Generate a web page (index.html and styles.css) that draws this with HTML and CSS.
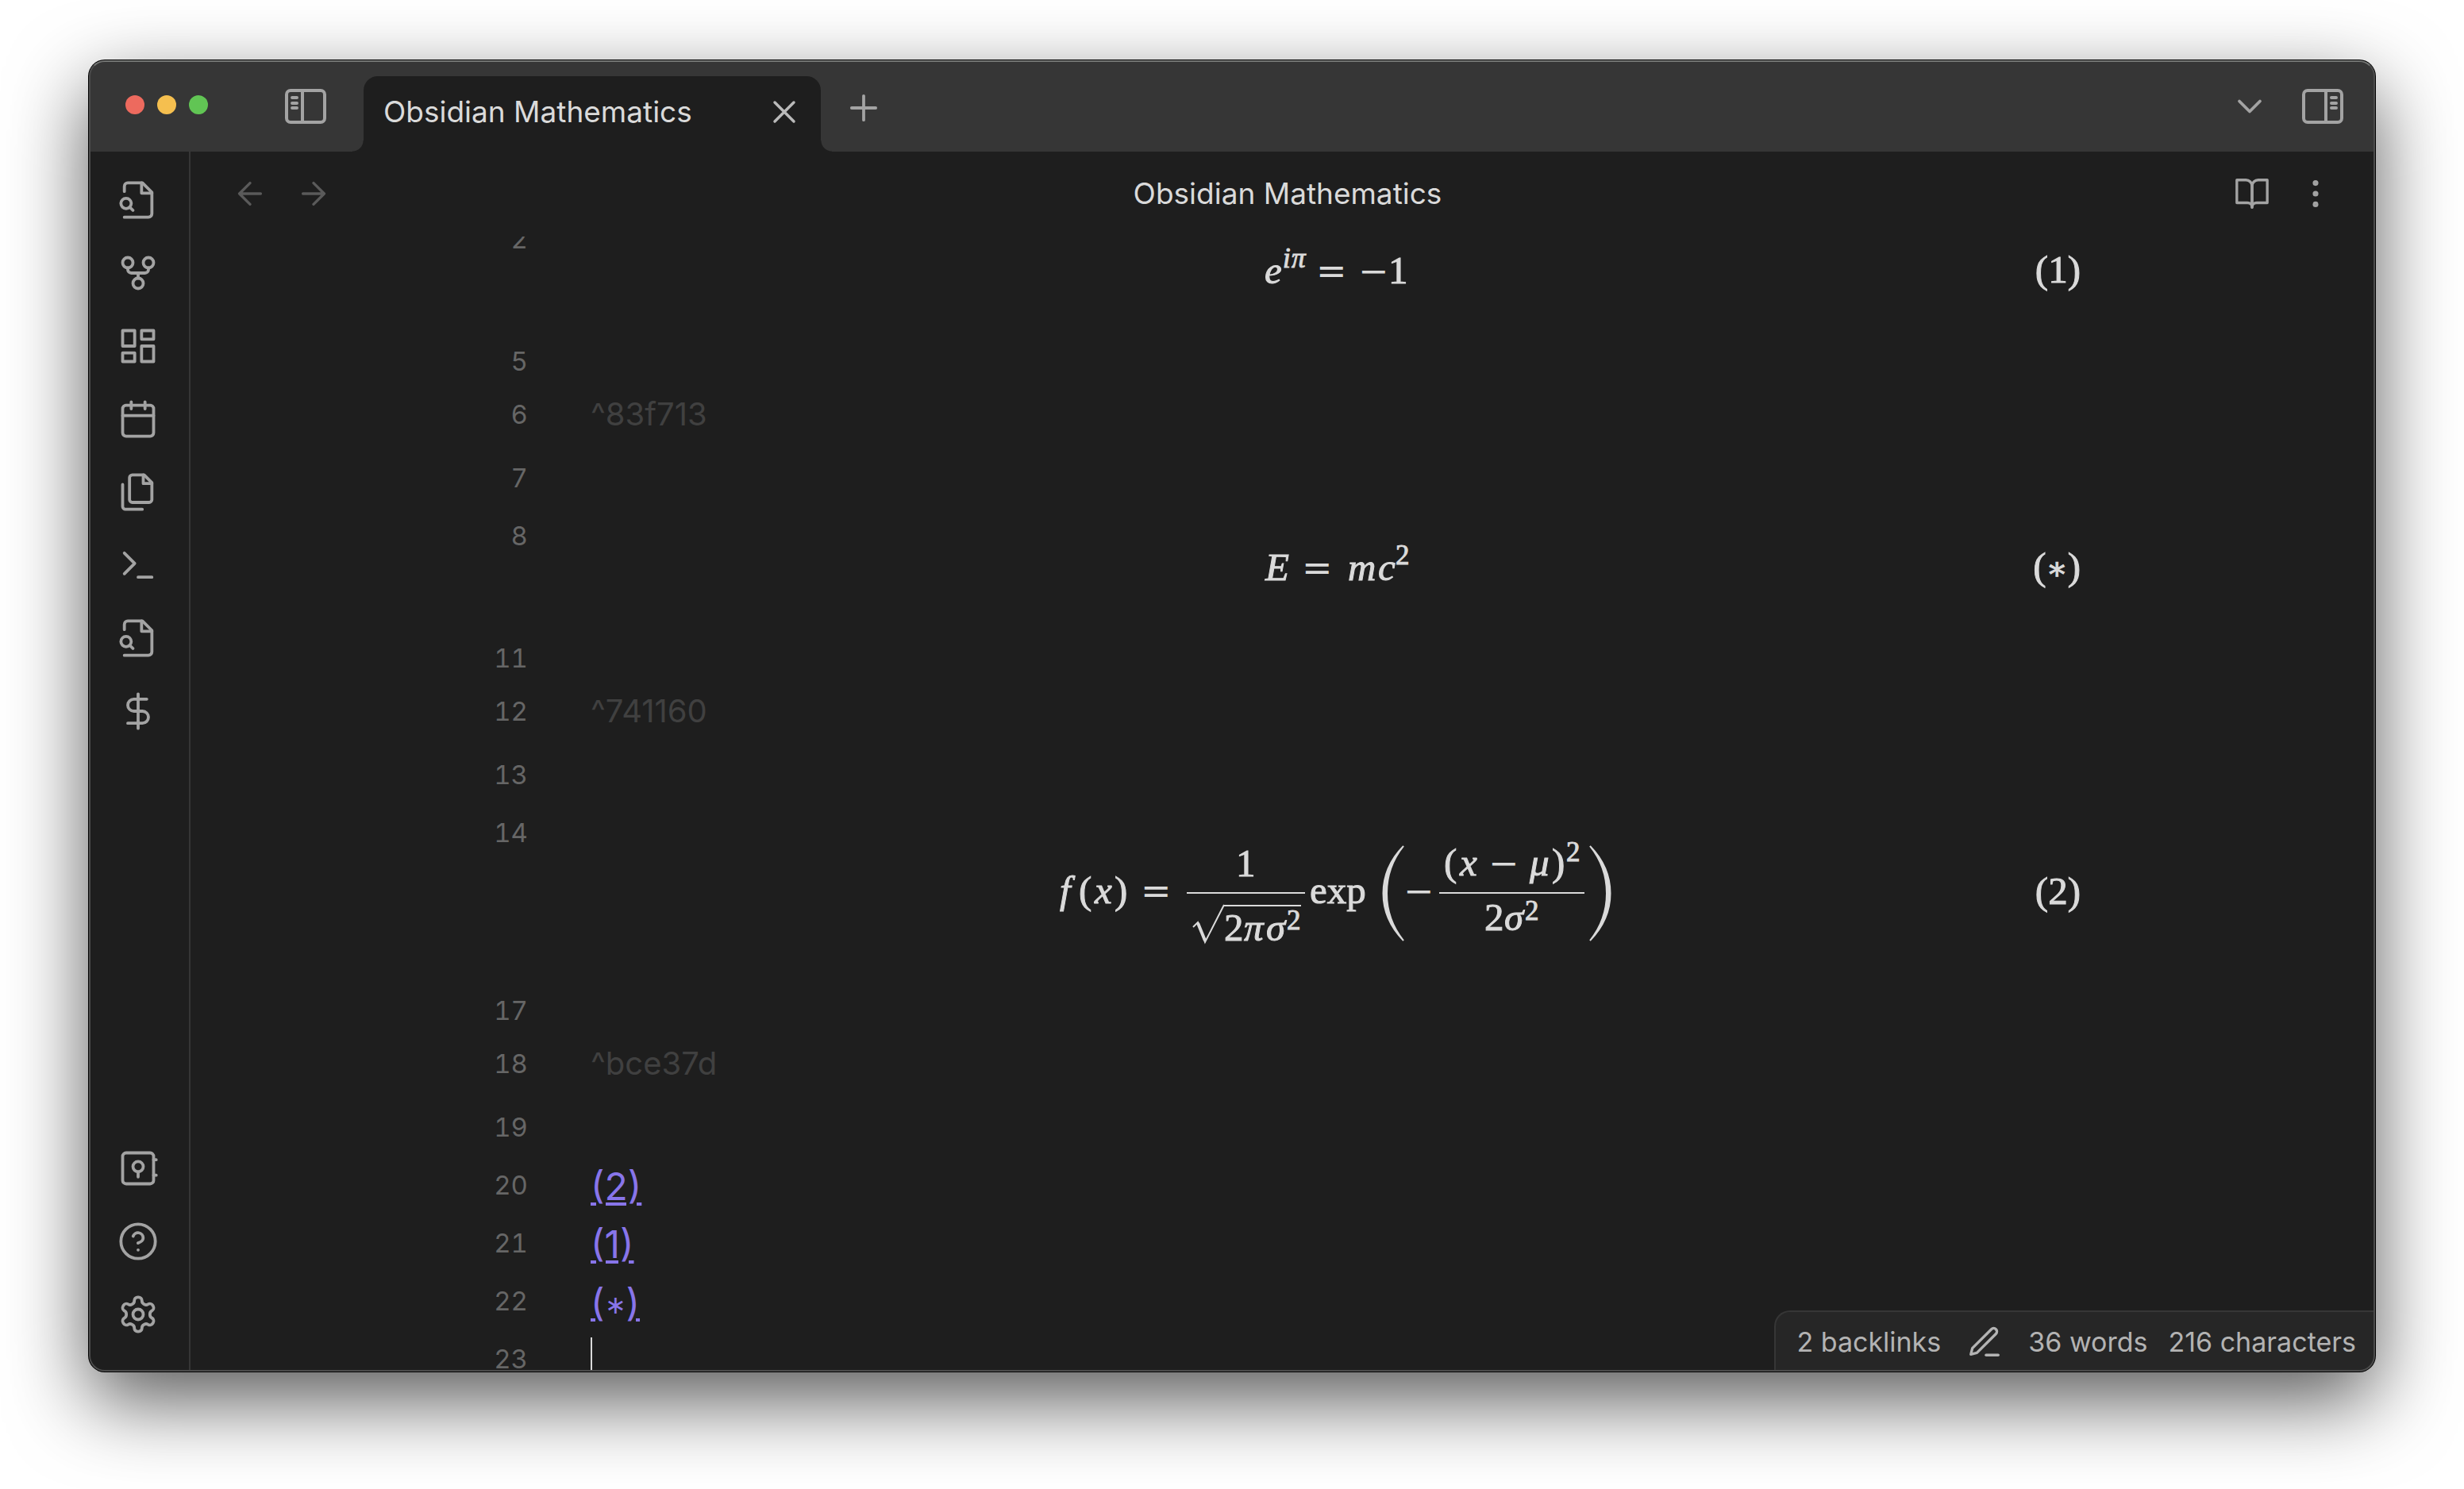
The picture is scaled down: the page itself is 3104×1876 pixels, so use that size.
FILE: index.html
```html
<!DOCTYPE html>
<html lang="en">
<head>
<meta charset="utf-8">
<title>Obsidian Mathematics</title>
<link rel="stylesheet" href="styles.css">
</head>
<body>
<svg class="sprite" aria-hidden="true">
  <symbol id="i-file-search" viewBox="0 0 24 24"><path d="M4 22h14a2 2 0 0 0 2-2V7.5L14.5 2H6a2 2 0 0 0-2 2v3"/><path d="M14 2v6h6"/><path d="M5 17a3 3 0 1 0 0-6 3 3 0 0 0 0 6z"/><path d="m9 18-1.5-1.5"/></symbol>
</svg>
<div class="window">
  <header class="titlebar">
    <div class="titlebar-left">
      <div class="lights">
        <button class="light red" aria-label="Close window"></button>
        <button class="light yellow" aria-label="Minimize window"></button>
        <button class="light green" aria-label="Zoom window"></button>
      </div>
      <button class="btn" aria-label="Toggle left sidebar">
        <svg class="panel" viewBox="0 0 52 44"><rect x="2" y="2" width="48" height="40" rx="5"/><path d="M22 2v40M9 11h6M9 18h6M9 24h6"/></svg>
      </button>
    </div>
    <div class="tab">
      <span class="tab-title">Obsidian Mathematics</span>
      <button class="btn bright" aria-label="Close tab"><svg class="icon s48" viewBox="0 0 24 24"><path d="M18 6 6 18M6 6l12 12"/></svg></button>
    </div>
    <button class="btn new-tab" aria-label="New tab"><svg class="icon s52" viewBox="0 0 24 24"><path d="M12 5v14M5 12h14"/></svg></button>
    <div class="titlebar-right">
      <button class="btn" aria-label="Tab list"><svg class="icon s52" viewBox="0 0 24 24"><path d="m6 9 6 6 6-6"/></svg></button>
      <button class="btn" aria-label="Toggle right sidebar">
        <svg class="panel" viewBox="0 0 52 44"><rect x="2" y="2" width="48" height="40" rx="5"/><path d="M30 2v40M37 11h6M37 18h6M37 24h6"/></svg>
      </button>
    </div>
  </header>

  <div class="body">
    <nav class="ribbon" aria-label="Ribbon">
      <div class="ribbon-group">
        <button class="btn" aria-label="Open quick switcher"><svg class="icon s52"><use href="#i-file-search"/></svg></button>
        <button class="btn" aria-label="Open graph view"><svg class="icon s52" viewBox="0 0 24 24"><circle cx="12" cy="18" r="3"/><circle cx="6" cy="6" r="3"/><circle cx="18" cy="6" r="3"/><path d="M18 9v1a2 2 0 0 1-2 2H8a2 2 0 0 1-2-2V9M12 12v3"/></svg></button>
        <button class="btn" aria-label="Create new canvas"><svg class="icon s52" viewBox="0 0 24 24"><rect x="3" y="3" width="7" height="9"/><rect x="14" y="3" width="7" height="5"/><rect x="14" y="12" width="7" height="9"/><rect x="3" y="16" width="7" height="5"/></svg></button>
        <button class="btn" aria-label="Open daily note"><svg class="icon s52" viewBox="0 0 24 24"><rect x="3" y="4" width="18" height="18" rx="2"/><path d="M16 2v4M8 2v4M3 10h18"/></svg></button>
        <button class="btn" aria-label="Insert template"><svg class="icon s52" viewBox="0 0 24 24"><path d="M15.5 2H8.6c-.4 0-.8.2-1.1.5-.3.3-.5.7-.5 1.1v12.8c0 .4.2.8.5 1.1.3.3.7.5 1.1.5h9.8c.4 0 .8-.2 1.1-.5.3-.3.5-.7.5-1.1V6.5L15.5 2z"/><path d="M3 7.6v12.8c0 .4.2.8.5 1.1.3.3.7.5 1.1.5h9.8"/><path d="M15 2v5h5"/></svg></button>
        <button class="btn" aria-label="Open command palette"><svg class="icon s52" viewBox="0 0 24 24"><path d="m4 17 6-6-6-6M12 19h8"/></svg></button>
        <button class="btn" aria-label="Search files"><svg class="icon s52"><use href="#i-file-search"/></svg></button>
        <button class="btn" aria-label="Math settings"><svg class="icon s52" viewBox="0 0 24 24"><path d="M12 2v20"/><path d="M17 5H9.500a3.500 3.500 0 0 0 0 7h5a3.500 3.500 0 0 1 0 7H6"/></svg></button>
      </div>
      <div class="ribbon-group">
        <button class="btn" aria-label="Open another vault"><svg class="icon s52" viewBox="0 0 24 24"><rect x="3" y="3" width="18" height="18" rx="2"/><circle cx="12" cy="11" r="3"/><path d="M12 14v3M21 7h1.500M21 16h1.500"/></svg></button>
        <button class="btn" aria-label="Help"><svg class="icon s52" viewBox="0 0 24 24"><circle cx="12" cy="12" r="10"/><path d="M9.090 9a3 3 0 0 1 5.830 1c0 2-3 3-3 3M12 17h.01"/></svg></button>
        <button class="btn" aria-label="Settings"><svg class="icon s52" viewBox="0 0 24 24"><path d="M12.220 2h-.44a2 2 0 0 0-2 2v.18a2 2 0 0 1-1 1.730l-.43.25a2 2 0 0 1-2 0l-.15-.08a2 2 0 0 0-2.730.73l-.22.38a2 2 0 0 0 .73 2.730l.15.1a2 2 0 0 1 1 1.720v.51a2 2 0 0 1-1 1.740l-.15.09a2 2 0 0 0-.73 2.730l.22.38a2 2 0 0 0 2.730.73l.15-.08a2 2 0 0 1 2 0l.43.25a2 2 0 0 1 1 1.730V20a2 2 0 0 0 2 2h.44a2 2 0 0 0 2-2v-.18a2 2 0 0 1 1-1.730l.43-.25a2 2 0 0 1 2 0l.15.08a2 2 0 0 0 2.730-.73l.22-.39a2 2 0 0 0-.73-2.730l-.15-.08a2 2 0 0 1-1-1.740v-.5a2 2 0 0 1 1-1.740l.15-.09a2 2 0 0 0 .73-2.730l-.22-.38a2 2 0 0 0-2.730-.73l-.15.08a2 2 0 0 1-2 0l-.43-.25a2 2 0 0 1-1-1.730V4a2 2 0 0 0-2-2z"/><circle cx="12" cy="12" r="3"/></svg></button>
      </div>
    </nav>

    <main class="view">
      <div class="view-header">
        <div class="view-nav">
          <button class="btn dim" aria-label="Back"><svg class="icon s46" viewBox="0 0 24 24"><path d="M19 12H5M12 19l-7-7 7-7"/></svg></button>
          <button class="btn dim" aria-label="Forward"><svg class="icon s46" viewBox="0 0 24 24"><path d="M5 12h14M12 5l7 7-7 7"/></svg></button>
        </div>
        <h1 class="view-title">Obsidian Mathematics</h1>
        <div class="view-actions">
          <button class="btn" aria-label="Reading view"><svg class="icon s46" viewBox="0 0 24 24"><path d="M2 3h6a4 4 0 0 1 4 4v14a3 3 0 0 0-3-3H2z"/><path d="M22 3h-6a4 4 0 0 0-4 4v14a3 3 0 0 1 3-3h7z"/></svg></button>
          <button class="btn" aria-label="More options"><svg class="icon s46" viewBox="0 0 24 24"><circle cx="12" cy="12" r="1"/><circle cx="12" cy="5" r="1"/><circle cx="12" cy="19" r="1"/></svg></button>
        </div>
      </div>

      <div class="editor">
        <div class="sizer">
          <div class="line equation">
            <span class="num">2</span>
            <div class="math">
              <svg class="formula" width="180" height="80" viewBox="0 0 180 80">
                <text y="55"><tspan class="v" x="0">e</tspan><tspan class="v sup" x="23" y="35">i</tspan><tspan class="v sup" x="34" y="35">π</tspan><tspan class="op" x="65" y="55">=</tspan><tspan class="op" x="118">−</tspan><tspan x="156">1</tspan></text>
              </svg>
              <span class="tag">(1)</span>
            </div>
          </div>
          <div class="line before-id"><span class="num">5</span></div>
          <div class="line id-line"><span class="num">6</span><span class="block-id">^83f713</span></div>
          <div class="line"><span class="num">7</span></div>
          <div class="line equation">
            <span class="num">8</span>
            <div class="math">
              <svg class="formula" width="180" height="80" viewBox="0 0 180 80">
                <text y="55"><tspan class="v" x="1">E</tspan><tspan class="op" x="47">=</tspan><tspan class="v" x="105">m</tspan><tspan class="v" x="143">c</tspan><tspan class="sup" x="165" y="35">2</tspan></text>
              </svg>
              <span class="tag">(<span class="star">∗</span>)</span>
            </div>
          </div>
          <div class="line before-id"><span class="num">11</span></div>
          <div class="line id-line"><span class="num">12</span><span class="block-id">^741160</span></div>
          <div class="line"><span class="num">13</span></div>
          <div class="line equation tall">
            <span class="num">14</span>
            <div class="math">
              <svg class="formula" width="700" height="140" viewBox="0 0 700 140">
                <text y="83"><tspan class="v" x="2">f</tspan><tspan x="26">(</tspan><tspan class="v" x="46">x</tspan><tspan x="71">)</tspan><tspan class="op" x="104">=</tspan><tspan x="317">exp</tspan><tspan class="op" x="435">−</tspan></text>
                <text><tspan x="224" y="49">1</tspan></text>
                <text y="130"><tspan x="209">2</tspan><tspan class="v" x="234">π</tspan><tspan class="v" x="262">σ</tspan><tspan class="sup" x="288" y="116">2</tspan></text>
                <text y="48"><tspan x="486">(</tspan><tspan class="v" x="506">x</tspan><tspan class="op" x="542">−</tspan><tspan class="v" x="594">μ</tspan><tspan x="622">)</tspan><tspan class="sup" x="640" y="30">2</tspan></text>
                <text y="117"><tspan x="537">2</tspan><tspan class="v" x="562">σ</tspan><tspan class="sup" x="588" y="104">2</tspan></text>
                <path class="rule" d="M162 70H311M480 70H663"/>
                <path class="rule" d="M208 86H306"/>
                <path class="radical" d="M170 113 176 107 185 132 209 85"/>
                <path class="radical heavy" d="M176 108 185 130"/>
                <path class="fence" d="M435 11C401 46 401 95 435 130C407 95 407 46 435 11ZM670 11C704 46 704 95 670 130C698 95 698 46 670 11Z"/>
              </svg>
              <span class="tag">(2)</span>
            </div>
          </div>
          <div class="line before-id"><span class="num">17</span></div>
          <div class="line id-line"><span class="num">18</span><span class="block-id">^bce37d</span></div>
          <div class="line"><span class="num">19</span></div>
          <div class="line"><span class="num">20</span><span class="text"><a href="#bce37d">(2)</a></span></div>
          <div class="line"><span class="num">21</span><span class="text"><a href="#83f713">(1)</a></span></div>
          <div class="line"><span class="num">22</span><span class="text"><a href="#741160">(<span class="link-star">∗</span>)</a></span></div>
          <div class="line"><span class="num">23</span><span class="caret"></span></div>
        </div>
      </div>
    </main>
  </div>

  <footer class="status">
    <span>2 backlinks</span>
    <button class="btn status-edit" aria-label="Live preview"><svg class="icon s46" viewBox="0 0 24 24"><path d="M13 20.500h8"/><path d="M16.500 3.500a2.120 2.120 0 0 1 3 3L7 19l-4 1 1-4Z"/></svg></button>
    <span>36 words</span>
    <span>216 characters</span>
  </footer>
</div>
</body>
</html>
```

FILE: styles.css
```css
* { box-sizing: border-box; }

body {
  margin: 0;
  height: 100vh;
  padding: 76px 112px 148px;
  background: #fff;
  color: #dadada;
  font-family: Inter, "Liberation Sans", sans-serif;
}

.sprite { position: absolute; width: 0; height: 0; }

.window {
  position: relative;
  display: flex;
  flex-direction: column;
  height: 100%;
  border-radius: 20px;
  background: #1e1e1e;
  box-shadow: 0 0 0 1px #000, 0 36px 100px rgba(0, 0, 0, .66);
  overflow: hidden;
}

/* light edge drawn over everything inside the window */
.window::after {
  content: "";
  position: absolute;
  inset: 0;
  border: 2px solid #4c4c4c;
  border-top-color: #747674;
  border-radius: 20px;
  pointer-events: none;
}

.btn {
  display: flex;
  padding: 0;
  border: 0;
  background: none;
  color: #a3a3a3;
}
.btn.bright { color: #bababa; }
.btn.dim { color: #5a5a5a; }

.icon, .panel {
  display: block;
  fill: none;
  stroke: currentColor;
  stroke-width: 1.75;
  stroke-linecap: round;
  stroke-linejoin: round;
}
.s46 { width: 46px; height: 46px; }
.s48 { width: 48px; height: 48px; }
.s52 { width: 52px; height: 52px; }
.panel { width: 52px; height: 44px; stroke-width: 4; }

/* title bar */
.titlebar {
  display: flex;
  align-items: center;
  flex: none;
  height: 115px;
  background: #363636;
}
.titlebar-left {
  display: flex;
  align-items: center;
  justify-content: space-between;
  width: 346px;
  padding: 0 47px 0 46px;
}
.lights { display: flex; gap: 16px; padding-bottom: 3px; }
.light {
  width: 24px;
  height: 24px;
  padding: 0;
  border: 0;
  border-radius: 50%;
}
.red { background: #ed6a5e; }
.yellow { background: #f5bf4f; }
.green { background: #61c554; }

.tab {
  position: relative;
  display: flex;
  align-items: center;
  justify-content: space-between;
  align-self: flex-end;
  width: 576px;
  height: 95px;
  padding: 0 22px 6px 25px;
  border-radius: 18px 18px 0 0;
  background: #1e1e1e;
  font-size: 37px;
}
.tab::before, .tab::after {
  content: "";
  position: absolute;
  bottom: 0;
  width: 14px;
  height: 14px;
}
.tab::before {
  right: 100%;
  background: radial-gradient(circle at 0 0, transparent 13px, #1e1e1e 14px);
}
.tab::after {
  left: 100%;
  background: radial-gradient(circle at 100% 0, transparent 13px, #1e1e1e 14px);
}
.new-tab { margin: 4px 0 0 28px; }
.titlebar-right {
  display: flex;
  align-items: center;
  gap: 40px;
  margin-left: auto;
  padding-right: 40px;
}

/* body */
.body { display: flex; flex: 1; min-height: 0; }

.ribbon {
  display: flex;
  flex-direction: column;
  justify-content: space-between;
  flex: none;
  width: 128px;
  padding: 35px 0 46px 36px;
  border-right: 2px solid #363636;
}
.ribbon-group { display: flex; flex-direction: column; gap: 40px; }

.view { display: flex; flex-direction: column; flex: 1; min-width: 0; }
.view-header {
  display: grid;
  grid-template-columns: 1fr auto 1fr;
  align-items: center;
  flex: none;
  height: 107px;
  padding: 0 52px 2px;
}
.view-nav, .view-actions { display: flex; gap: 34px; }
.view-actions { justify-content: flex-end; }
.view-title {
  margin: 0;
  padding-left: 12px;
  font-size: 37px;
  font-weight: 400;
}

/* editor, scrolled a little past its top */
.editor { flex: 1; min-height: 0; overflow: hidden; }
.sizer { max-width: 2010px; margin: -33px auto 0; }
.line {
  display: grid;
  grid-template-columns: 54px 1fr;
  column-gap: 79px;
  height: 73px;
  line-height: 72px;
}
.before-id { height: 67px; }
.id-line { height: 80px; }
.equation { height: 154px; }
.equation.tall { height: 224px; }
.num {
  color: #666;
  font-size: 33px;
  font-variant-numeric: tabular-nums;
  text-align: right;
}
.block-id { color: #404040; font-size: 40px; }
.text { font-size: 48px; line-height: 75px; }
.text a {
  color: #8875ea;
  text-decoration: underline;
  text-decoration-thickness: 4px;
  text-underline-offset: 3px;
}
.link-star {
  display: inline-block;
  font-size: 32px;
  line-height: 1;
  vertical-align: 3px;
}
.caret { width: 2px; height: 52px; margin-top: 9px; background: #dadada; }

/* formulas */
.math {
  display: grid;
  grid-template-columns: 1fr auto 1fr;
  align-items: center;
  font-family: "Liberation Serif", serif;
  font-size: 49px;
  line-height: 1;
}
.formula {
  grid-column: 2;
  display: block;
  fill: #dadada;
  overflow: visible;
}
.formula text { stroke: #dadada; stroke-width: 1; }
.formula .op { stroke: none; }
.tag { justify-self: end; padding-bottom: 5px; -webkit-text-stroke: 1px #dadada; }
.v { font-style: italic; }
.sup { font-size: 35px; }
.op { font-family: "DejaVu Serif", serif; font-size: 46px; }
.star { font-family: "DejaVu Serif", serif; font-size: 40px; }
.rule { fill: none; stroke: #dadada; stroke-width: 2; }
.radical { fill: none; stroke: #dadada; stroke-width: 2; }
.heavy { stroke-width: 4; }
.fence { stroke: #dadada; stroke-width: 2; }

/* status bar */
.status {
  position: absolute;
  right: 0;
  bottom: 0;
  display: flex;
  align-items: center;
  gap: 26px;
  height: 77px;
  padding: 0 24px 0 26px;
  border: 2px solid #363636;
  border-width: 2px 0 0 2px;
  border-radius: 20px 0 0 0;
  background: #262626;
  color: #b3b3b3;
  font-size: 34px;
}
.status-edit { margin: 0 6px; color: #b3b3b3; }
```
